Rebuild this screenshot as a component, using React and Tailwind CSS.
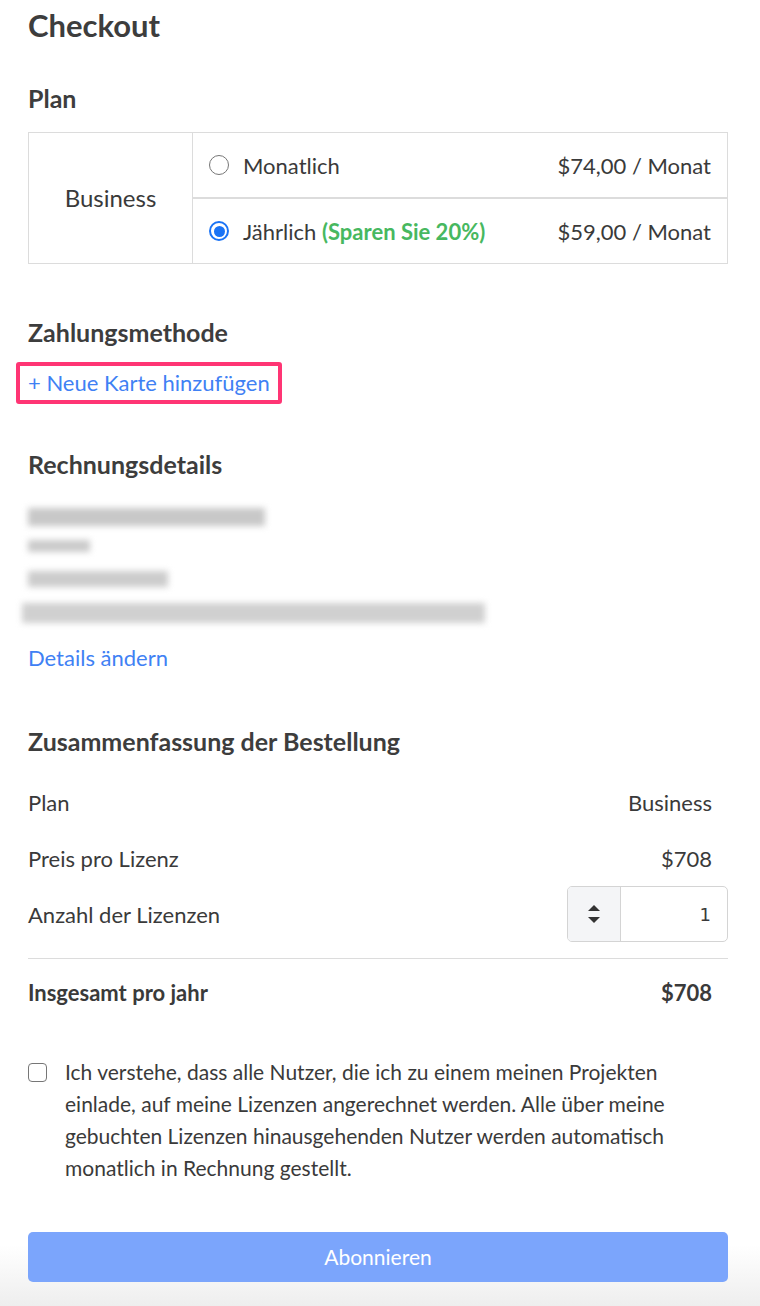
import { useState } from 'react';

const font = { fontFamily: 'Lato, "Open Sans", sans-serif' };

const Radio = ({ checked }) =>
  checked ? (
    <span className="flex h-[20px] w-[20px] items-center justify-center rounded-full border-2 border-[#1a73f5] bg-white">
      <span className="h-[11px] w-[11px] rounded-full bg-[#1a73f5]" />
    </span>
  ) : (
    <span className="h-[20px] w-[20px] rounded-full border-[1.5px] border-[#767676] bg-white" />
  );

const SummaryRow = ({ label, children }) => (
  <div className="flex h-[56px] items-center justify-between text-[22px] text-[#3a3a3a]">
    <span>{label}</span>
    {children}
  </div>
);

const Heading = ({ className = '', children }) => (
  <h2 className={`text-[25px] font-bold leading-[32px] text-[#3d3d3d] ${className}`}>{children}</h2>
);

const App = () => {
  const [annual, setAnnual] = useState(true);
  const [agree, setAgree] = useState(false);
  const [seats, setSeats] = useState(1);

  return (
    <div style={font} className="min-h-[1306px] bg-white text-[#3a3a3a]">
      <div className="pl-[28px] pr-[32px] pt-[5px]">
        <h1 className="text-[31px] font-bold leading-[40px] text-[#3d3d3d]">Checkout</h1>

        <Heading className="mt-[37px]">Plan</Heading>
        <div className="mt-[18px] flex border border-[#dcdcdc]">
          <div className="flex w-[164px] items-center justify-center border-r border-[#dcdcdc] text-[24px]">
            Business
          </div>
          <div className="flex-1">
            <button
              onClick={() => setAnnual(false)}
              className="flex h-[66px] w-full items-center justify-between border-b-2 border-[#dcdcdc] pl-[16px] pr-[16px] text-[22px]"
            >
              <span className="flex items-center gap-[14px]">
                <Radio checked={!annual} />
                Monatlich
              </span>
              <span>$74,00 / Monat</span>
            </button>
            <button
              onClick={() => setAnnual(true)}
              className="flex h-[64px] w-full items-center justify-between pl-[16px] pr-[16px] text-[22px]"
            >
              <span className="flex items-center gap-[14px]">
                <Radio checked={annual} />
                <span>
                  Jährlich <span className="font-bold text-[#47b85f]">(Sparen Sie 20%)</span>
                </span>
              </span>
              <span>$59,00 / Monat</span>
            </button>
          </div>
        </div>

        <Heading className="mt-[52px]">Zahlungsmethode</Heading>
        <div className="-ml-[12px] mt-[14px] inline-block rounded-[3px] border-[4px] border-[#ff3574] px-[8px] py-[3px]">
          <a href="#" className="block text-[22px] leading-[28px] text-[#3f81f4]">
            + Neue Karte hinzufügen
          </a>
        </div>

        <Heading className="mt-[44px]">Rechnungsdetails</Heading>
        <div className="blur-[3px]">
          <div className="mt-[28px] h-[18px] w-[237px] bg-[#c8c8c8]" />
          <div className="mt-[14px] h-[12px] w-[62px] bg-[#cacaca]" />
          <div className="mt-[19px] h-[16px] w-[140px] bg-[#cccccc]" />
          <div className="-ml-[6px] mt-[16px] h-[20px] w-[463px] bg-[#d0d0d0]" />
        </div>
        <a href="#" className="mt-[21px] block text-[22px] leading-[28px] text-[#3f81f4]">
          Details ändern
        </a>

        <Heading className="mt-[53px]">Zusammenfassung der Bestellung</Heading>
        <div className="mt-[17px]">
          <SummaryRow label="Plan">
            <span className="pr-[16px]">Business</span>
          </SummaryRow>
          <SummaryRow label="Preis pro Lizenz">
            <span className="pr-[16px]">$708</span>
          </SummaryRow>
          <SummaryRow label="Anzahl der Lizenzen">
            <div className="flex h-[56px] w-[161px] overflow-hidden rounded-[5px] border border-[#d4d4d4]">
              <div className="flex w-[53px] flex-col items-center justify-center gap-[6px] border-r border-[#d4d4d4] bg-[#f4f5f7]">
                <button onClick={() => setSeats(seats + 1)} className="h-0 w-0 border-x-[6px] border-b-[6px] border-x-transparent border-b-[#333]" />
                <button onClick={() => setSeats(Math.max(1, seats - 1))} className="h-0 w-0 border-x-[6px] border-t-[6px] border-x-transparent border-t-[#333]" />
              </div>
              <div className="flex flex-1 items-center justify-end pr-[16px] text-[18px]" style={{ fontFamily: '"DejaVu Sans", sans-serif' }}>
                {seats}
              </div>
            </div>
          </SummaryRow>
          <div className="mt-[16px] border-t border-[#dcdcdc]" />
          <div className="flex h-[66px] items-center justify-between text-[22px] font-bold text-[#3a3a3a]">
            <span>Insgesamt pro jahr</span>
            <span className="pr-[16px]">${708 * seats}</span>
          </div>
        </div>

        <label className="mt-[31px] flex cursor-pointer gap-[18px]">
          <span className="mt-[7px] shrink-0">
            <input
              type="checkbox"
              checked={agree}
              onChange={() => setAgree(!agree)}
              className="block h-[19px] w-[19px] appearance-none rounded-[4px] border-[1.5px] border-[#767676] bg-white checked:bg-[#1a73f5]"
            />
          </span>
          <span className="whitespace-nowrap text-[21px] leading-[32px] text-[#3a3a3a]">
            Ich verstehe, dass alle Nutzer, die ich zu einem meinen Projekten
            <br />
            einlade, auf meine Lizenzen angerechnet werden. Alle über meine
            <br />
            gebuchten Lizenzen hinausgehenden Nutzer werden automatisch
            <br />
            monatlich in Rechnung gestellt.
          </span>
        </label>
      </div>

      <div className="bg-gradient-to-b from-white via-white to-[#eeeeee] pb-[24px] pl-[28px] pr-[32px] pt-[48px]">
        <button className="block h-[50px] w-full rounded-[5px] bg-[#7ba5fc] text-[21px] text-white">
          Abonnieren
        </button>
      </div>
    </div>
  );
};

export default App;
